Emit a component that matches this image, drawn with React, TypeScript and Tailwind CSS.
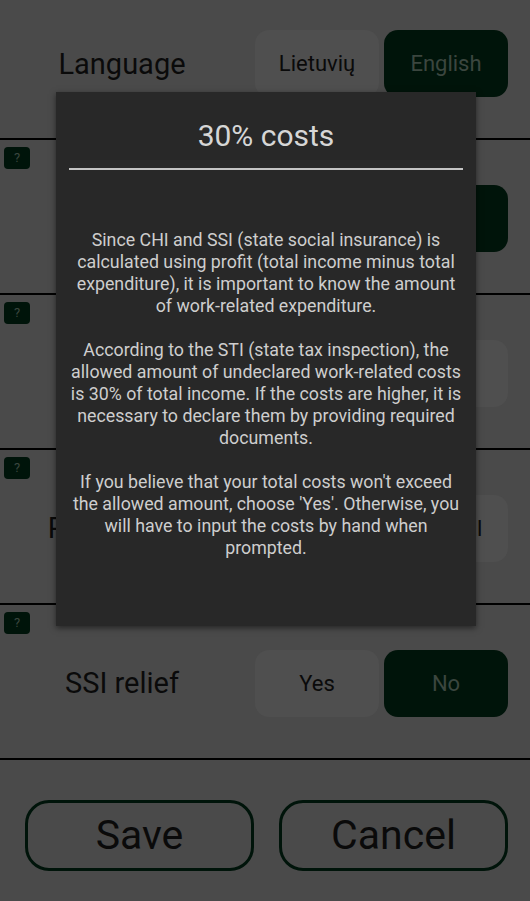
import React from "react";

type Row = {
  label: string;
  left: string;
  right: string;
  selected: "left" | "right";
};

const rows: Row[] = [
  { label: "Tax rate", left: "5%", right: "15%", selected: "right" },
  { label: "Tax year", left: "2019", right: "2020", selected: "left" },
  { label: "Profit costs", left: "30%", right: "Manual", selected: "left" },
  { label: "SSI relief", left: "Yes", right: "No", selected: "right" },
];

function Choice({ text, active }: { text: string; active: boolean }) {
  return (
    <button
      type="button"
      className={
        active
          ? "flex h-[67px] w-[124px] items-center justify-center rounded-[14px] bg-[#00140a] text-[22px] text-[#3b463f]"
          : "flex h-[67px] w-[124px] items-center justify-center rounded-[14px] bg-[#4f4f4f] text-[22px] text-[#0a0a0a]"
      }
    >
      {text}
    </button>
  );
}

function SettingRow({ row }: { row: Row }) {
  return (
    <div className="flex h-[155px] flex-col border-b-2 border-black">
      <div className="pl-[4px] pt-[7px]">
        <button
          type="button"
          className="flex h-[22px] w-[26px] items-center justify-center rounded-[4px] bg-[#00140a] text-[13px] text-[#3b463f]"
        >
          ?
        </button>
      </div>
      <div className="mt-[16px] flex items-center">
        <div className="w-[244px] text-center text-[29px] text-[#0a0a0a]">{row.label}</div>
        <div className="ml-[11px] flex gap-[5px]">
          <Choice text={row.left} active={row.selected === "left"} />
          <Choice text={row.right} active={row.selected === "right"} />
        </div>
      </div>
    </div>
  );
}

export default function App() {
  return (
    <div className="relative h-[901px] w-[530px] overflow-hidden bg-[#4a4a4a] font-['Roboto',sans-serif]">
      <div className="flex h-[140px] items-start border-b-2 border-black pt-[30px]">
        <div className="mt-[13px] w-[244px] text-center text-[29px] text-[#0a0a0a]">Language</div>
        <div className="ml-[11px] flex gap-[5px]">
          <Choice text="Lietuvių" active={false} />
          <Choice text="English" active />
        </div>
      </div>

      {rows.map((r) => (
        <SettingRow key={r.label} row={r} />
      ))}

      <div className="flex justify-between pl-[25px] pr-[22px] pt-[40px]">
        <button
          type="button"
          className="flex h-[71px] w-[229px] items-center justify-center rounded-[24px] border-[3px] border-[#00140a] text-[41px] text-[#0a0a0a]"
        >
          Save
        </button>
        <button
          type="button"
          className="flex h-[71px] w-[229px] items-center justify-center rounded-[24px] border-[3px] border-[#00140a] text-[41px] text-[#0a0a0a]"
        >
          Cancel
        </button>
      </div>

      <div className="absolute left-[56px] top-[92px] flex h-[534px] w-[420px] flex-col bg-[#282828] shadow-[0_2px_6px_rgba(0,0,0,0.5)]">
        <div className="pt-[26px] text-center text-[30px] leading-[36px] text-[#d6d6d6]">30% costs</div>
        <div className="mx-[13px] mt-[14px] h-[2px] bg-[#c4c4c4]" />
        <div className="mt-[59px] px-[12px] text-center text-[17.8px] leading-[22px] text-[#cecece]">
          <p>
            Since CHI and SSI (state social insurance) is calculated using profit (total income minus total
            expenditure), it is important to know the amount of work-related expenditure.
          </p>
          <p className="mt-[22px]">
            According to the STI (state tax inspection), the allowed amount of undeclared work-related costs is
            30% of total income. If the costs are higher, it is necessary to declare them by providing required
            documents.
          </p>
          <p className="mt-[22px]">
            If you believe that your total costs won't exceed the allowed amount, choose 'Yes'. Otherwise, you
            will have to input the costs by hand when prompted.
          </p>
        </div>
      </div>
    </div>
  );
}
